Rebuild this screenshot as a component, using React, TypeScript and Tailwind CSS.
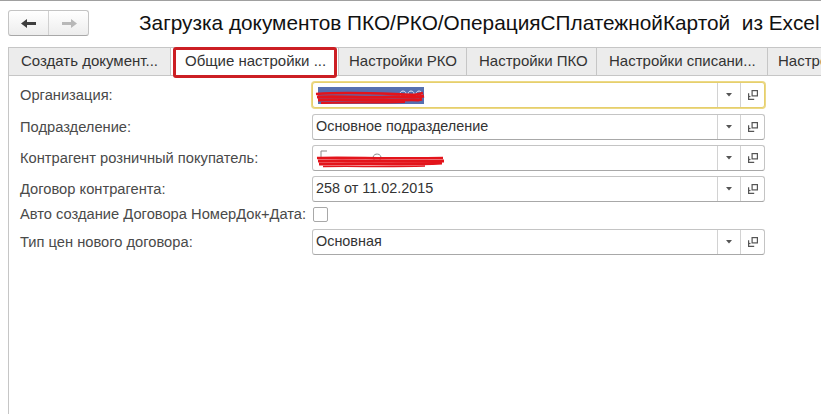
import React from "react";

const CopyIcon = () => (
  <svg width="10" height="10" viewBox="0 0 10 10" fill="none" stroke="#555" strokeWidth="1.2">
    <rect x="4.1" y="0.6" width="5.3" height="5.3" />
    <path d="M0.6 3.2 V9.4 H6.2" />
    <path d="M0.6 6.5 H2.5" />
  </svg>
);

const Arrow = () => (
  <svg width="6" height="4" viewBox="0 0 6 4">
    <path d="M0 0 H6 L3 3.5 Z" fill="#555" />
  </svg>
);

function Field({
  children,
  focused,
}: {
  children?: React.ReactNode;
  focused?: boolean;
}) {
  return (
    <div
      className={
        "w-[453px] h-[26px] flex rounded-[3px] bg-white border " +
        (focused
          ? "border-[#e6cf6c] ring-1 ring-[#ecd987]"
          : "border-[#c4c4c4] border-b-[#a8a8a8]")
      }
    >
      <div className="flex-1 flex items-center pl-[3px] text-[14.4px] text-[#333] overflow-hidden whitespace-nowrap">
        {children}
      </div>
      <div className="w-[23px] border-l border-[#d2d2d2] flex items-center justify-center">
        <Arrow />
      </div>
      <div className="w-[24px] border-l border-[#d2d2d2] flex items-center justify-center">
        <CopyIcon />
      </div>
    </div>
  );
}

function Label({ children }: { children: React.ReactNode }) {
  return (
    <div className="w-[292px] shrink-0 text-[14.7px] text-[#4a4a4a] whitespace-nowrap">
      {children}
    </div>
  );
}

const Tab = ({
  w,
  children,
  active,
  pl = "pl-[11px]",
}: {
  w: string;
  children: React.ReactNode;
  active?: boolean;
  pl?: string;
}) => (
  <div
    className={
      `${w} ${pl} shrink-0 h-full flex items-center border-l border-t border-[#c6c6c6] text-[15px] text-[#333] whitespace-nowrap relative ` +
      (active ? "bg-white" : "bg-[#ececec]")
    }
  >
    {children}
    {active && (
      <div className="absolute left-[2px] right-[1px] top-[-1px] bottom-[-3px] border-[3px] border-[#cc1f24] rounded-[3px]" />
    )}
  </div>
);

export default function App() {
  return (
    <div className="w-[821px] h-[414px] bg-white border-t border-[#a0a0a0] overflow-hidden flex flex-col font-['Liberation_Sans',Arial,sans-serif]">
      {/* header */}
      <div className="flex items-center pt-[9px] pb-[11px] pl-[8px] shrink-0">
        <div className="w-[81px] h-[26px] flex rounded-[3px] border border-[#c4c4c4] border-b-[#a8a8a8] bg-gradient-to-b from-white to-[#ededed]">
          <div className="w-[40px] flex items-center justify-center border-r border-[#d0d0d0]">
            <svg width="16" height="9" viewBox="0 0 16 9">
              <path d="M0 4.5 L6 0 V3 H15 V6 H6 V9 Z" fill="#3e3e3e" />
            </svg>
          </div>
          <div className="flex-1 flex items-center justify-center">
            <svg width="16" height="9" viewBox="0 0 16 9">
              <path d="M16 4.5 L10 0 V3 H1 V6 H10 V9 Z" fill="#b8b8b8" />
            </svg>
          </div>
        </div>
        <div className="ml-[50px] text-[20.8px] text-[#111] whitespace-pre leading-none">
          Загрузка документов ПКО/РКО/ОперацияСПлатежнойКартой  из Excel
        </div>
      </div>

      {/* tabs */}
      <div className="ml-[8px] h-[29px] flex border-b border-[#c6c6c6] shrink-0">
        <Tab w="w-[162px]" pl="pl-[12px]">Создать документ...</Tab>
        <Tab w="w-[168px]" pl="pl-[14px]" active>
          Общие настройки ...
        </Tab>
        <Tab w="w-[128px]" pl="pl-[10px]">Настройки РКО</Tab>
        <Tab w="w-[130px]" pl="pl-[12px]">Настройки ПКО</Tab>
        <Tab w="w-[171px]" pl="pl-[12px]">Настройки списани...</Tab>
        <Tab w="w-[80px]" pl="pl-[10px]">Настройки</Tab>
      </div>

      {/* content */}
      <div className="ml-[8px] flex-1 border-l border-[#c6c6c6] pl-[11px] pt-[6px]">
        <div className="flex items-center h-[26px]">
          <Label>Организация:</Label>
          <Field focused>
            <svg width="110" height="19" viewBox="0 0 110 19" className="ml-[-1px]">
              <rect x="3" y="1" width="106" height="17" fill="#5670b0" />
              <path d="M88 5 a3 3 0 1 0 0.1 0 M96 5 a3 3 0 1 0 0.1 0 M104 5 a3 3 0 1 0 0.1 0" stroke="#e8eaf6" strokeWidth="1" fill="none" />
              <path d="M1 8 C25 6 55 7 80 8 S100 9 108 7" stroke="#e3141b" strokeWidth="2.5" fill="none" />
              <path d="M2 11 C25 10 50 12 75 11 S100 12 109 10" stroke="#e3141b" strokeWidth="3" fill="none" />
              <path d="M3 14 C30 13 60 15 85 14 S100 15 107 13" stroke="#e3141b" strokeWidth="3" fill="none" />
              <path d="M6 17 C30 16 60 17 90 16" stroke="#e3141b" strokeWidth="2" fill="none" />
            </svg>
          </Field>
        </div>
        <div className="flex items-center h-[26px] mt-[6px]">
          <Label>Подразделение:</Label>
          <Field>Основное подразделение</Field>
        </div>
        <div className="flex items-center h-[26px] mt-[5px]">
          <Label>Контрагент розничный покупатель:</Label>
          <Field>
            <svg width="130" height="19" viewBox="0 0 130 19" className="ml-[-1px]">
              <path d="M6 8 V2 H12 M62 5 a4 3.5 0 1 0 0.1 0" stroke="#8a8a8a" strokeWidth="1" fill="none" />
              <path d="M2 9 C30 8 70 10 128 9" stroke="#e3141b" strokeWidth="2.5" fill="none" />
              <path d="M3 12 C40 11 80 13 129 12" stroke="#e3141b" strokeWidth="3" fill="none" />
              <path d="M4 15 C40 14 90 16 127 14" stroke="#e3141b" strokeWidth="3" fill="none" />
              <path d="M8 17.5 C40 17 70 18 110 17" stroke="#e3141b" strokeWidth="1.5" fill="none" />
            </svg>
          </Field>
        </div>
        <div className="flex items-center h-[26px] mt-[5px]">
          <Label>Договор контрагента:</Label>
          <Field>258 от 11.02.2015</Field>
        </div>
        <div className="flex items-center h-[15px] mt-[5px]">
          <Label>Авто создание Договора НомерДок+Дата:</Label>
          <div className="ml-[1px] w-[15px] h-[15px] rounded-[2px] border border-[#a8a8a8] bg-white" />
        </div>
        <div className="flex items-center h-[26px] mt-[7px]">
          <Label>Тип цен нового договора:</Label>
          <Field>Основная</Field>
        </div>
      </div>
    </div>
  );
}
